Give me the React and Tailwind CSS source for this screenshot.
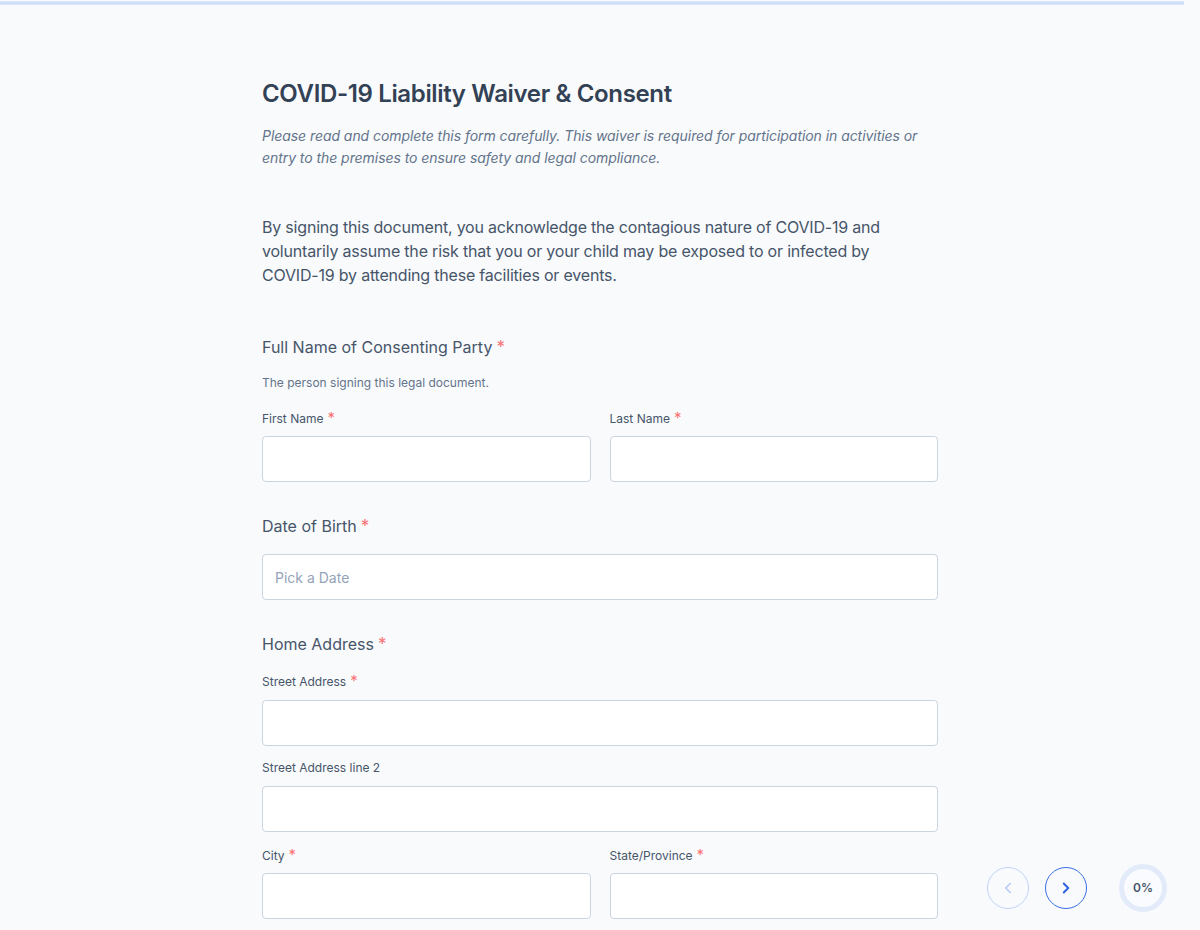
import React from "react";

const font = { fontFamily: "Inter, 'Noto Sans', sans-serif" };

function Star() {
  return <span className="ml-1 text-[#f87171] text-[15px] leading-none relative top-[-1px]">*</span>;
}

function FieldLabel({ children, required }) {
  return (
    <div className="text-[12px] leading-4 text-[#475569] flex items-start">
      <span>{children}</span>
      {required && <Star />}
    </div>
  );
}

function Input({ placeholder }) {
  return (
    <div className="h-[46px] w-full rounded-[4px] border border-[#cbd5e1] bg-white flex items-center px-[12px]">
      {placeholder && <span className="text-[14px] text-[#94a3b8]">{placeholder}</span>}
    </div>
  );
}

function Section({ children, required }) {
  return (
    <div className="text-[16px] leading-6 text-[#475569] flex items-start">
      <span>{children}</span>
      {required && <span className="ml-1 text-[#f87171] text-[17px] leading-6">*</span>}
    </div>
  );
}

export default function App() {
  return (
    <div className="min-h-[930px] w-full bg-[#f8fafc] relative overflow-hidden" style={font}>
      {/* progress strip along the top */}
      <div className="pt-[1px] w-[1184px]">
        <div className="h-[4px] bg-[#cfdefa] border-y border-[#dbe6fb]" />
      </div>

      <div className="ml-[262px] w-[676px] pt-[73px]">
        <h1 className="text-[24px] leading-8 font-semibold text-[#334155] tracking-[-0.35px]">
          COVID-19 Liability Waiver &amp; Consent
        </h1>
        <p className="mt-[15px] text-[14px] leading-[22px] italic text-[#64748b] tracking-[-0.06px]">
          Please read and complete this form carefully. This waiver is required for participation in activities or entry to the premises to ensure safety and legal compliance.
        </p>

        <p className="mt-[46px] text-[16px] leading-6 text-[#475569] tracking-[-0.2px] pr-[40px]">
          By signing this document, you acknowledge the contagious nature of COVID-19 and voluntarily assume the risk that you or your child may be exposed to or infected by COVID-19 by attending these facilities or events.
        </p>

        <div className="mt-[48px]">
          <Section required>Full Name of Consenting Party</Section>
          <p className="mt-[16px] text-[12px] leading-4 text-[#64748b]">The person signing this legal document.</p>
          <div className="mt-[20px] grid grid-cols-2 gap-x-[19px]">
            <div>
              <FieldLabel required>First Name</FieldLabel>
              <div className="mt-[9px]"><Input /></div>
            </div>
            <div>
              <FieldLabel required>Last Name</FieldLabel>
              <div className="mt-[9px]"><Input /></div>
            </div>
          </div>
        </div>

        <div className="mt-[32px]">
          <Section required>Date of Birth</Section>
          <div className="mt-[16px]"><Input placeholder="Pick a Date" /></div>
        </div>

        <div className="mt-[32px]">
          <Section required>Home Address</Section>
          <div className="mt-[18px]">
            <FieldLabel required>Street Address</FieldLabel>
            <div className="mt-[10px]"><Input /></div>
          </div>
          <div className="mt-[14px]">
            <FieldLabel>Street Address line 2</FieldLabel>
            <div className="mt-[10px]"><Input /></div>
          </div>
          <div className="mt-[16px] grid grid-cols-2 gap-x-[19px]">
            <div>
              <FieldLabel required>City</FieldLabel>
              <div className="mt-[9px]"><Input /></div>
            </div>
            <div>
              <FieldLabel required>State/Province</FieldLabel>
              <div className="mt-[9px]"><Input /></div>
            </div>
          </div>
        </div>
      </div>

      {/* floating navigation */}
      <div className="absolute left-[987px] top-[864px] flex items-center">
        <button className="w-[42px] h-[42px] rounded-full border border-[#c3d5fb] flex items-center justify-center bg-transparent">
          <svg width="18" height="18" viewBox="0 0 24 24" fill="none" stroke="#b3c9f7" strokeWidth="2" strokeLinecap="round" strokeLinejoin="round">
            <path d="M15 18l-6-6 6-6" />
          </svg>
        </button>
        <button className="ml-[16px] w-[42px] h-[42px] rounded-full border-[1.5px] border-[#3b6fe8] flex items-center justify-center bg-transparent">
          <svg width="18" height="18" viewBox="0 0 24 24" fill="none" stroke="#2f62e0" strokeWidth="2.6" strokeLinecap="round" strokeLinejoin="round">
            <path d="M9 18l6-6-6-6" />
          </svg>
        </button>
        <div className="ml-[32px] w-[48px] h-[48px] rounded-full border-[5px] border-[#e3ebfa] bg-[#f9fbfe] flex items-center justify-center">
          <span className="text-[12px] font-semibold text-[#475569]">0%</span>
        </div>
      </div>
    </div>
  );
}
